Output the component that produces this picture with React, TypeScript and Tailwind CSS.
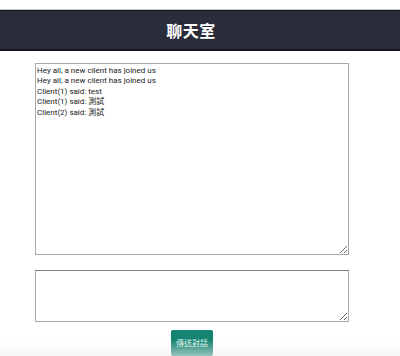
import React from "react";

const messages = [
  "Hey all, a new client has joined us",
  "Hey all, a new client has joined us",
  "Client(1) said: test",
  "Client(1) said: 測試",
  "Client(2) said: 測試",
].join("\n");

export default function App() {
  return (
    <div
      className="relative w-[400px] h-[356px] overflow-hidden bg-white"
      style={{ fontFamily: 'Roboto, "Noto Sans CJK TC", sans-serif' }}
    >
      <div className="h-[9px]" />
      <div className="h-[42px] border-t border-t-[#c9c9cf] bg-[#2a2c39] border-b-2 border-b-[#15161d] flex items-center justify-center">
        <div className="border-t border-[#15161d] w-full h-full flex items-center justify-center">
          <h1
            className="text-[16px] font-bold text-white leading-none tracking-[0.5px] pr-[18px]"
            style={{ fontFamily: '"Noto Sans CJK TC", sans-serif' }}
          >
            聊天室
          </h1>
        </div>
      </div>
      <div className="flex flex-col items-start pl-[35px] pt-[12px]">
        <textarea
          readOnly
          spellCheck={false}
          value={messages}
          className="w-[314px] h-[192px] border border-[#a9a9a9] bg-white px-[1px] py-[2px] text-[8px] leading-[10.4px] text-[#222] resize-y outline-none"
          style={{ fontFamily: 'Roboto, "Noto Sans CJK TC", sans-serif' }}
        />
        <textarea
          spellCheck={false}
          className="mt-[15px] w-[314px] h-[52px] border border-[#a9a9a9] border-t-[#7d7d7d] bg-white text-[8px] resize-y outline-none"
        />
        <button
          className="mt-[8px] ml-[136px] w-[42px] h-[26px] rounded-[2px] bg-[#158471] text-[#dff2ec] text-[8px] flex items-center justify-center"
          style={{ fontFamily: '"Noto Sans CJK TC", sans-serif' }}
        >
          傳送對話
        </button>
      </div>
      <div className="pointer-events-none absolute left-0 right-0 bottom-0 h-[16px] bg-gradient-to-b from-transparent to-[#f0f0f0]/60" />
    </div>
  );
}
